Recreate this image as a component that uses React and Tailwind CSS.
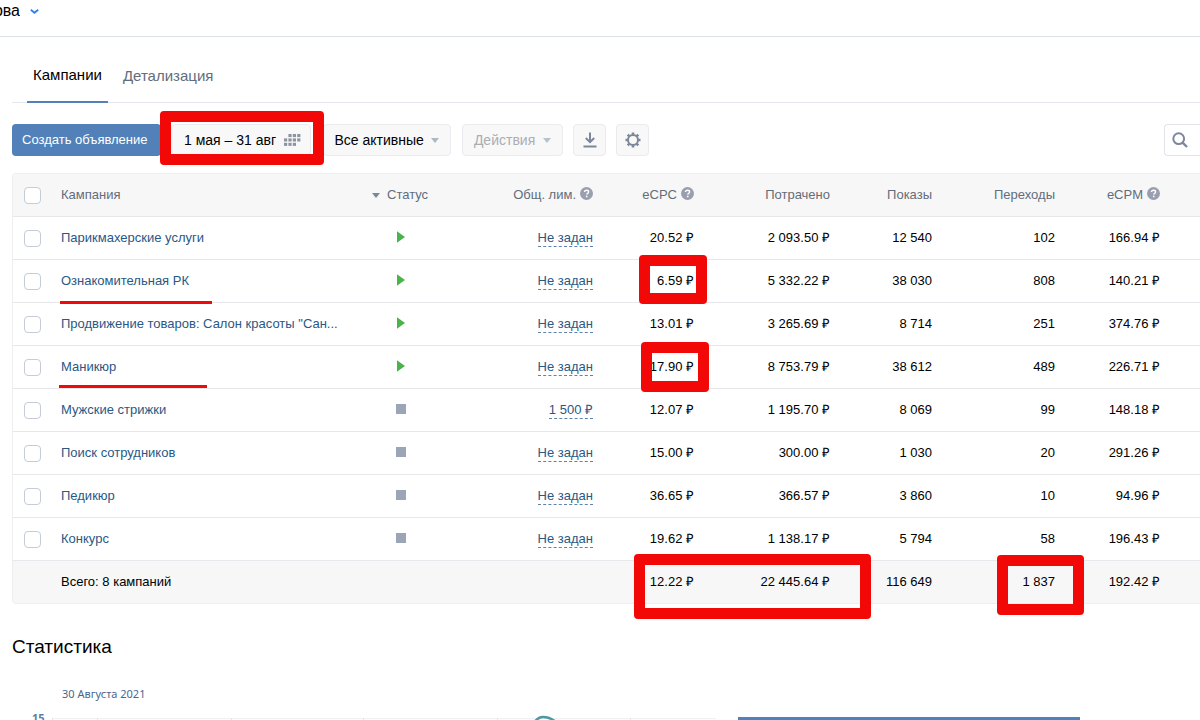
import React from "react";

const LIMIT = "Не задан";

const CAMPAIGNS = [
  { name: "Парикмахерские услуги", active: true, limit: LIMIT, cpc: "20.52 ₽", spent: "2 093.50 ₽", shows: "12 540", clicks: "102", cpm: "166.94 ₽" },
  { name: "Ознакомительная РК", active: true, limit: LIMIT, cpc: "6.59 ₽", spent: "5 332.22 ₽", shows: "38 030", clicks: "808", cpm: "140.21 ₽", line: "-left-px top-[41px] w-[152px]", box: "-top-[5px] left-[46px] h-[49px] w-[68px]" },
  { name: "Продвижение товаров: Салон красоты \"Сан...", active: true, limit: LIMIT, cpc: "13.01 ₽", spent: "3 265.69 ₽", shows: "8 714", clicks: "251", cpm: "374.76 ₽" },
  { name: "Маникюр", active: true, limit: LIMIT, cpc: "17.90 ₽", spent: "8 753.79 ₽", shows: "38 612", clicks: "489", cpm: "226.71 ₽", line: "-left-0.5 top-[39px] w-[148px]", box: "-top-1 left-[48px] h-[50px] w-[68px]" },
  { name: "Мужские стрижки", active: false, limit: "1 500 ₽", cpc: "12.07 ₽", spent: "1 195.70 ₽", shows: "8 069", clicks: "99", cpm: "148.18 ₽" },
  { name: "Поиск сотрудников", active: false, limit: LIMIT, cpc: "15.00 ₽", spent: "300.00 ₽", shows: "1 030", clicks: "20", cpm: "291.26 ₽" },
  { name: "Педикюр", active: false, limit: LIMIT, cpc: "36.65 ₽", spent: "366.57 ₽", shows: "3 860", clicks: "10", cpm: "94.96 ₽" },
  { name: "Конкурс", active: false, limit: LIMIT, cpc: "19.62 ₽", spent: "1 138.17 ₽", shows: "5 794", clicks: "58", cpm: "196.43 ₽" },
];

function Frame({ className }) {
  return (
    <span
      aria-hidden="true"
      className={"pointer-events-none absolute z-10 rounded border-[11px] border-[#f30808] " + className}
    />
  );
}

function Check({ label }) {
  return (
    <input
      type="checkbox"
      aria-label={label}
      className="ml-[11px] block size-[17px] appearance-none rounded border border-[#c5ccd6] bg-white checked:bg-[#5181b8]"
    />
  );
}

function Caret({ className }) {
  return (
    <svg viewBox="0 0 8 5" aria-hidden="true" className={"h-[5px] w-2 shrink-0 " + className}>
      <path d="M0 0h8L4 5z" fill="currentColor" />
    </svg>
  );
}

function HelpLabel({ children }) {
  return (
    <span className="flex items-center justify-end gap-1">
      {children}
      <svg viewBox="0 0 13 13" aria-hidden="true" className="mb-[3px] size-[13px] shrink-0">
        <circle cx="6.5" cy="6.5" r="6.5" fill="#9a9fb0" />
        <path d="M4.5 5.1c0-1.2.9-1.9 2.1-1.9 1.1 0 2 .7 2 1.7 0 1.4-1.9 1.4-1.9 2.7" fill="none" stroke="#fff" strokeWidth="1.4" />
        <rect x="5.9" y="8.7" width="1.6" height="1.5" fill="#fff" />
      </svg>
    </span>
  );
}

function CalendarDots() {
  const dots = [[1, 0], [2, 0], [3, 0], [0, 1], [1, 1], [2, 1], [3, 1], [0, 2], [1, 2], [2, 2]];
  return (
    <svg viewBox="0 0 17 12" aria-hidden="true" className="h-3 w-[17px]">
      {dots.map(([c, r]) => (
        <rect key={c + "-" + r} x={c * 4.4} y={r * 4.4} width="3.2" height="3.1" fill="#8d93a1" />
      ))}
    </svg>
  );
}

function Status({ active }) {
  return active ? (
    <svg viewBox="0 0 8 12" role="img" aria-label="Запущена" className="mb-0.5 ml-[25px] block h-3 w-2">
      <path d="M0 0.3v11.4L8 6z" fill="#4bb34b" />
    </svg>
  ) : (
    <svg viewBox="0 0 10 10" role="img" aria-label="Остановлена" className="mb-0.5 ml-6 block size-2.5">
      <rect width="10" height="10" fill="#9ca5b6" />
    </svg>
  );
}

const TOOL = "flex h-8 items-center justify-center rounded border border-[#e9ebef] bg-[#f8f8f9] text-[14px]";

export default function App() {
  return (
    <div className="h-screen overflow-hidden bg-white font-['Liberation_Sans',Arial,sans-serif] text-[13px] leading-4 text-black">
      <header className="flex h-[37px] items-start border-b border-[#dce1e6] pt-0.5">
        <button type="button" className="flex items-center gap-2.5 text-[16px] leading-[18px]">
          <span className="flex w-5 justify-end overflow-hidden">ова</span>
          <svg viewBox="0 0 9 5" aria-hidden="true" className="h-[5px] w-[9px]">
            <path d="M0.8 0.8L4.5 3.8L8.2 0.8" fill="none" stroke="#2f80ed" strokeWidth="1.8" />
          </svg>
        </button>
      </header>

      <main className="pl-3">
        <nav className="mt-3 flex h-[54px] border-b border-[#e4e8ec] pl-[15px] text-[15px]">
          <a href="#campaigns" className="-mb-px flex items-center border-b-2 border-[#5181b8] px-1.5">Кампании</a>
          <a href="#details" className="ml-[15px] flex items-center text-[#626d7a]">Детализация</a>
        </nav>

        <div className="mt-[21px] flex">
          <button type="button" className="h-8 rounded bg-[#5181b8] pl-2.5 pr-[13px] text-white">Создать объявление</button>
          <div className="relative ml-2.5">
            <button type="button" className={TOOL + " w-[140px] gap-2 pl-1"}>
              1 мая – 31 авг
              <CalendarDots />
            </button>
            <Frame className="-left-[11px] -top-[13px] h-[54px] w-[164px]" />
          </div>
          <button type="button" className={TOOL + " ml-3 gap-[7px] px-[11px]"}>
            Все активные
            <Caret className="text-[#aeb7c2]" />
          </button>
          <button type="button" className={TOOL + " ml-[11px] gap-2 px-[11px] text-[#aaaeb3]"}>
            Действия
            <Caret className="text-[#b8c1cc]" />
          </button>
          <button type="button" aria-label="Скачать" className={TOOL + " ml-2.5 w-[33px]"}>
            <svg viewBox="0 0 14 16" aria-hidden="true" className="h-4 w-3.5" fill="none" stroke="#7c879b" strokeWidth="2">
              <path d="M7 0.5v9M2.8 6L7 10.2L11.2 6M0.5 14.5h13" />
            </svg>
          </button>
          <button type="button" aria-label="Настройки" className={TOOL + " ml-2.5 w-[33px]"}>
            <svg viewBox="0 0 16 16" aria-hidden="true" className="size-4" fill="none" stroke="#7c879b">
              <circle cx="8" cy="8" r="5" strokeWidth="2" />
              <path
                d="M8 0.500v2.200M8 13.300v2.200M0.500 8h2.200M13.300 8h2.200M2.700 2.700l1.500 1.500M11.800 11.800l1.500 1.500M2.700 13.300l1.500-1.500M11.800 4.200l1.500-1.500"
                strokeWidth="2.6"
              />
            </svg>
          </button>
          <label className="ml-auto flex h-8 w-9 items-center overflow-hidden rounded-l border border-r-0 border-[#e1e5ea] pl-[7px]">
            <svg viewBox="0 0 16 16" aria-hidden="true" className="size-4 shrink-0" fill="none" stroke="#7c879b">
              <circle cx="6.7" cy="6.7" r="5.4" strokeWidth="2" />
              <path d="M10.6 10.6L15 15" strokeWidth="2.4" />
            </svg>
            <input type="search" aria-label="Поиск" className="w-full min-w-0 outline-none" />
          </label>
        </div>

        <div className="mt-[17px] rounded-l border border-r-0 border-[#edeef0]">
          <table className="w-full table-fixed border-separate border-spacing-0 text-right">
            <colgroup>
              <col className="w-12" />
              <col />
              <col className="w-[101px]" />
              <col className="w-[120px]" />
              <col className="w-[101px]" />
              <col className="w-[136px]" />
              <col className="w-[102px]" />
              <col className="w-[123px]" />
              <col className="w-[145px]" />
            </colgroup>
            <thead>
              <tr className="h-[43px] bg-[#f7f7f8] text-[#626d7a] *:border-b *:border-[#e7e8ec] *:p-0 *:font-normal">
                <th><Check label="Выбрать все" /></th>
                <th className="text-left">Кампания</th>
                <th>
                  <span className="flex items-center gap-[7px]">
                    <Caret className="text-[#7c879b]" />
                    Статус
                  </span>
                </th>
                <th><HelpLabel>Общ. лим.</HelpLabel></th>
                <th><HelpLabel>eCPC</HelpLabel></th>
                <th>Потрачено</th>
                <th>Показы</th>
                <th>Переходы</th>
                <th><span className="block pr-10"><HelpLabel>eCPM</HelpLabel></span></th>
              </tr>
            </thead>
            <tbody>
              {CAMPAIGNS.map((c) => (
                <tr key={c.name} className="h-[43px] *:border-b *:border-[#e7e8ec] *:p-0">
                  <td><Check label={c.name} /></td>
                  <td className="relative text-left">
                    <a href="#campaign" className="text-[#2a5885]">{c.name}</a>
                    {c.line && <span aria-hidden="true" className={"absolute z-10 h-[3px] bg-[#f30808] " + c.line} />}
                  </td>
                  <td><Status active={c.active} /></td>
                  <td>
                    <a href="#limit" className="inline-block border-b border-dashed border-[#5f83a8] text-[#2a5885]">{c.limit}</a>
                  </td>
                  <td className="relative">
                    {c.cpc}
                    {c.box && <Frame className={c.box} />}
                  </td>
                  <td>{c.spent}</td>
                  <td>{c.shows}</td>
                  <td>{c.clicks}</td>
                  <td><span className="block pr-10">{c.cpm}</span></td>
                </tr>
              ))}
            </tbody>
            <tfoot>
              <tr className="h-[42px] bg-[#f7f7f8] *:p-0">
                <td />
                <td className="text-left">Всего: 8 кампаний</td>
                <td />
                <td />
                <td className="relative">
                  12.22 ₽
                  <Frame className="-top-[7px] left-[41px] h-[65px] w-[237px]" />
                </td>
                <td>22 445.64 ₽</td>
                <td>116 649</td>
                <td className="relative">
                  1 837
                  <Frame className="-top-[6px] left-[65px] h-[60px] w-[87px]" />
                </td>
                <td><span className="block pr-10">192.42 ₽</span></td>
              </tr>
            </tfoot>
          </table>
        </div>

        <section>
          <h2 className="mt-[31px] text-[19px] leading-6">Статистика</h2>
          <div className="mt-[27px] flex items-start">
            <figure className="w-[708px] text-[#45688e]">
              <figcaption className="pl-[50px] font-['Noto_Sans','Open_Sans',sans-serif] text-[11px]">30 Августа 2021</figcaption>
              <svg viewBox="0 0 708 40" aria-hidden="true" className="mt-2 h-10 w-full">
                <text x="20" y="12" fontSize="11" fontWeight="bold" fontFamily="'Noto Sans', sans-serif" fill="#5b7fa6">15</text>
                <path d="M40 8.500h664" stroke="#f0f1f3" />
                <path d="M40.500 8v32M85.500 8v32M219.500 8v32M351.500 8v32M485.500 8v32M618.500 8v32" stroke="#e2e5e9" />
                <path d="M519 18Q524 7 531 7T544 12L552 26" fill="none" stroke="#4a9aa5" strokeWidth="2.500" />
              </svg>
            </figure>
            <div className="ml-[18px] mt-[31px] h-10 w-[342px] bg-[#4f81bd]" />
          </div>
        </section>
      </main>
    </div>
  );
}
